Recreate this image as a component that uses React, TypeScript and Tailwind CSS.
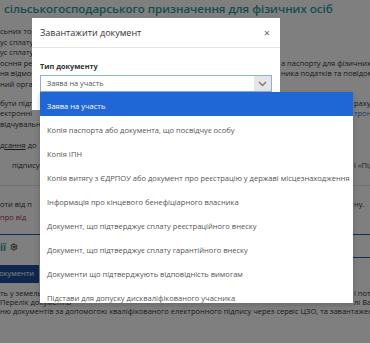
import { Settings } from "lucide-react";

const items = [
  "Заява на участь",
  "Копія паспорта або документа, що посвідчує особу",
  "Копія ІПН",
  "Копія витягу з ЄДРПОУ або документ про реєстрацію у державі місцезнаходження",
  "Інформація про кінцевого бенефіціарного власника",
  "Документ, що підтверджує сплату реєстраційного внеску",
  "Документ, що підтверджує сплату гарантійного внеску",
  "Документи що підтверджують відповідність вимогам",
  "Підстави для допуску дискваліфікованого учасника",
];

type LineProps = {
  left: React.ReactNode;
  right?: React.ReactNode;
  gap?: string;
  className?: string;
};

const Line = ({ left, right, gap = "w-[281px]", className = "" }: LineProps) => (
  <div className={"flex whitespace-nowrap overflow-hidden " + className}>
    <span className={"shrink-0 overflow-hidden " + gap}>{left}</span>
    {right && <span>{right}</span>}
  </div>
);

const App = () => {
  return (
    <div className="relative h-[343px] w-[370px] overflow-hidden bg-white font-['Open_Sans',sans-serif]">
      {/* page behind the dialog */}
      <div className="flex flex-col text-[7.5px] leading-[10.5px] text-[#333]">
        <h2 className="pl-1 text-[11.5px] font-semibold leading-[18px] text-[#2a9a9c] whitespace-nowrap">
          сільськогосподарського призначення для фізичних осіб
        </h2>
        <div className="mt-[8px] flex flex-col">
          <Line left="сьних торгів з продажу" />
          <Line left="ус сплату гарантійного внеску" />
          <Line left="ус сплату реєстраційного внеску" />
          <Line left="осння реєстрації" right="а паспорту для фізичних осіб" />
          <Line left="ня відмови від" right="ника податків та повідомлення" />
          <Line left="ний орган" />
        </div>
        <div className="mt-[8.5px] flex flex-col">
          <Line left="бути підписані" right="рахунку" gap="w-[354px]" />
          <Line left="ектронні" right={<span className="text-[#337ab7]">тронного</span>} gap="w-[354px]" />
          <Line left="відчувальним" />
        </div>
        <Line
          className="mt-[10.5px]"
          left={
            <>
              д<span className="underline">сання</span> до
            </>
          }
        />
        <Line className="mt-[9.5px]" left={<span className="pl-[12px]">підписує</span>} right="і «Підписати»" gap="w-[354px]" />
        <div className="mt-[14.5px] border-t border-[#e4e4e4]" />
        <Line className="mt-[13px]" left="оти від п" right="ну." gap="w-[354px]" />
        <Line className="mt-[2.5px]" left={<span className="text-[#b0304a]">про від</span>} />
        <div className="mt-[11.5px] border-t border-[#1f5fb0]" />
        <div className="mt-[6px] flex h-[13px] items-center gap-[4px] text-[10px] font-bold text-[#2a9a9c]">
          <span>ії</span>
          <Settings size={8} strokeWidth={3} className="text-[#444]" />
        </div>
        <div className="mt-[3px] ml-[60px] border-t border-[#1f5fb0]" />
        <div className="mt-[7px] flex">
          <div className="-ml-[11px] flex h-[18px] items-center bg-[#1c4f9e] px-[5px] text-[7.5px] text-white">
            Документи
          </div>
        </div>
        <div className="mt-[6px] flex flex-col leading-[9px]">
          <Line left="ть у земельних торгах" right="і пот" gap="w-[354px]" />
          <Line left="Перелік документів" right="лі Ва" gap="w-[354px]" />
          <Line
            left="ню документів за допомогою кваліфікованого електронного підпису через сервіс ЦЗО, та завантаження"
            gap="w-[370px]"
          />
        </div>
      </div>

      {/* backdrop */}
      <div className="absolute inset-0 bg-black/50" />

      {/* dialog */}
      <div className="absolute left-[32px] top-[18px] w-[248px] bg-white">
        <div className="flex h-[30px] items-center justify-between border-b border-[#e5e5e5] pl-[8px] pr-[10px]">
          <span className="text-[9px] text-[#333]">Завантажити документ</span>
          <span className="text-[11px] leading-none text-[#666]">×</span>
        </div>
        <div className="px-[8px] pt-[13px] pb-[18px]">
          <div className="text-[7.3px] font-bold leading-[11px] text-[#333]">Тип документу</div>
          <div className="relative mt-[3px]">
            <div className="flex h-[17px] items-center justify-between border border-[#8eb1d8] bg-white">
              <span className="pl-[6px] text-[7.3px] text-[#555]">Заява на участь</span>
              <span className="flex h-full w-[17px] items-center justify-center bg-[#e6e6e6]">
                <svg width="9" height="6" viewBox="0 0 9 6" fill="none">
                  <path d="M1 1l3.5 3.5L8 1" stroke="#777" strokeWidth="1.4" />
                </svg>
              </span>
            </div>
            <ul className="absolute left-0 top-full z-10 h-[211px] w-[313px] overflow-hidden bg-white shadow-[0_2px_6px_rgba(0,0,0,0.2)]">
              {items.map((item, i) => (
                <li
                  key={i}
                  className={
                    "flex h-[24px] items-center whitespace-nowrap pl-[7px] pt-[5px] text-[7.55px] " +
                    (i === 0 ? "bg-[#1f66d6] text-white" : "text-[#555]")
                  }
                >
                  {item}
                </li>
              ))}
            </ul>
          </div>
        </div>
      </div>
    </div>
  );
};

export default App;
